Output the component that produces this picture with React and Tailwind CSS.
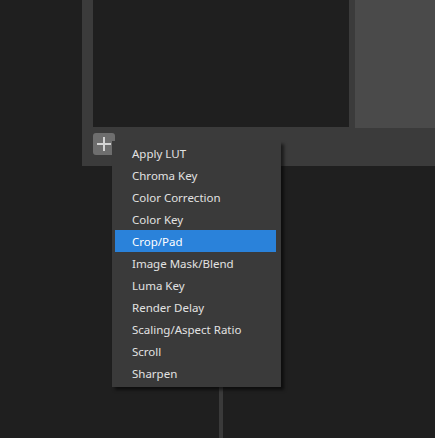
const filters = [
  'Apply LUT',
  'Chroma Key',
  'Color Correction',
  'Color Key',
  'Crop/Pad',
  'Image Mask/Blend',
  'Luma Key',
  'Render Delay',
  'Scaling/Aspect Ratio',
  'Scroll',
  'Sharpen',
];

export default function App() {
  const active = 'Crop/Pad';

  return (
    <div
      className="relative w-[435px] h-[438px] overflow-hidden bg-[#1f1f1f]"
      style={{ fontFamily: '"Noto Sans", "Open Sans", sans-serif' }}
    >
      {/* filters panel */}
      <div className="ml-[82px] h-[166px] bg-[#3b3b3b] flex flex-col">
        <div className="flex gap-[6px] h-[128px]">
          <div className="ml-[11px] w-[256px] h-[127px] bg-[#1f1f1f]" />
          <div className="flex-1 bg-[#4a4a4a]" />
        </div>
        <div className="ml-[11px] mt-[5px] w-[22px] h-[22px] rounded-[3px] bg-[#6e6e6e] flex items-center justify-center">
          <svg width="14" height="14" viewBox="0 0 14 14">
            <path d="M7 0v14M0 7h14" stroke="#d4d4d4" strokeWidth="2" />
          </svg>
        </div>
      </div>

      {/* splitter */}
      <div className="absolute left-[219px] top-[380px] w-[4px] h-[60px] bg-[#3a3a3a]" />

      {/* context menu */}
      <div className="absolute left-[112px] top-[141px] w-[169px] pt-[1px] pb-[3px] px-[3px] bg-[#3a3a3a] shadow-[3px_3px_3px_rgba(0,0,0,0.55)]">
        {filters.map((f) => (
          <div
            key={f}
            className={
              'h-[22px] flex items-center pl-[17px] mr-[2px] pt-[1px] text-[11.5px] text-[#e2e2e2] ' +
              (f === active ? 'bg-[#2a82da] text-white' : '')
            }
          >
            {f}
          </div>
        ))}
      </div>
    </div>
  );
}
